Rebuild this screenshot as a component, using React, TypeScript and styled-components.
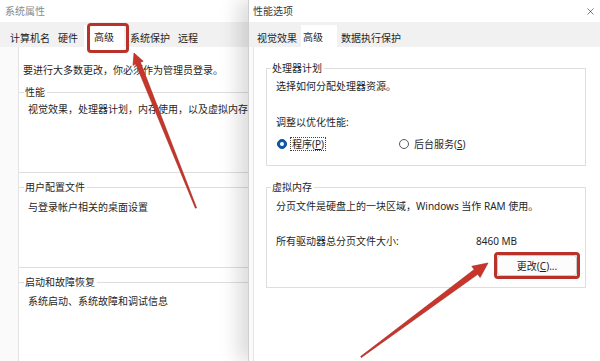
import React from 'react'
import styled, { createGlobalStyle, css } from 'styled-components'
import { X } from 'lucide-react'

const GlobalStyle = createGlobalStyle`
    html, body {
        margin: 0;
        padding: 0;
        background: #ffffff;
    }
`

const RED = '#b9322a'

const Screen = styled.div`
    position: relative;
    width: 600px;
    height: 361px;
    display: flex;
    overflow: hidden;
    background: #ffffff;
    font-family: 'Noto Sans', 'Noto Sans CJK SC', sans-serif;
    font-size: 10px;
    color: #1f1f1f;
`

const Dialog = styled.section<{ $width: number; $front?: boolean }>`
    width: ${({ $width }) => $width}px;
    flex: none;
    display: flex;
    flex-direction: column;
    overflow: hidden;
    background: #fafafa;
    ${({ $front }) =>
        $front &&
        css`
            border-left: 1px solid #cfcfcf;
            box-shadow: -10px 0 18px rgba(0, 0, 0, 0.14);
            z-index: 1;
        `}
`

const TitleBar = styled.header<{ $padLeft: number; $inactive?: boolean }>`
    height: 22px;
    flex: none;
    display: flex;
    align-items: center;
    justify-content: space-between;
    padding: 0 5px 0 ${({ $padLeft }) => $padLeft}px;
    background: #ffffff;
    color: ${({ $inactive }) => ($inactive ? '#8a8a8a' : '#3a3a3a')};
    line-height: 14px;
`

const CloseButton = styled.span`
    display: flex;
    color: #222;
`

const TabStrip = styled.nav<{ $padLeft: number }>`
    height: 25px;
    flex: none;
    display: flex;
    align-items: flex-end;
    padding-left: ${({ $padLeft }) => $padLeft}px;
    background: #f1f1f1;
`

const Tab = styled.div<{ $active?: boolean; $pad?: string; $margin?: string; $highlight?: boolean }>`
    position: relative;
    height: ${({ $active }) => ($active ? 22 : 20)}px;
    display: flex;
    align-items: center;
    padding: ${({ $pad }) => $pad || '0 4px'};
    margin: ${({ $margin }) => $margin || '0'};
    white-space: nowrap;
    background: ${({ $active }) => ($active ? '#ffffff' : 'transparent')};
    ${({ $highlight }) =>
        $highlight &&
        css`
            &::after {
                content: '';
                position: absolute;
                left: 3px;
                right: -5px;
                top: -2px;
                bottom: -6px;
                border: 3px solid ${RED};
                border-radius: 4px;
            }
        `}
`

const LeftPanel = styled.div`
    flex: 1;
    display: flex;
    flex-direction: column;
    margin-left: 18px;
    padding-top: 16px;
    border-left: 1px solid #e3e3e3;
    background: #ffffff;
`

const RightPanel = styled.div`
    flex: 1;
    display: flex;
    flex-direction: column;
    margin-left: 4px;
    padding: 14px 15px 0 12px;
    border-left: 1px solid #e6e6e6;
    background: #ffffff;
`

const Line = styled.div<{ $gap?: number; $indent?: number }>`
    height: 14px;
    line-height: 14px;
    white-space: nowrap;
    margin-top: ${({ $gap }) => $gap || 0}px;
    padding-left: ${({ $indent }) => $indent || 0}px;
`

const Group = styled.div<{ $gap?: number; $grow?: boolean }>`
    display: flex;
    flex-direction: column;
    margin-top: ${({ $gap }) => $gap || 0}px;
    ${({ $grow }) => $grow && 'flex: 1;'}
`

const GroupHead = styled.div`
    height: 14px;
    display: flex;
`

const HeadLead = styled.span<{ $boxed?: boolean }>`
    width: 5px;
    margin-top: 7px;
    box-sizing: border-box;
    border-top: 1px solid #dedede;
    ${({ $boxed }) => $boxed && 'border-left: 1px solid #dedede;'}
`

const HeadTail = styled.span<{ $boxed?: boolean }>`
    flex: 1;
    margin-top: 7px;
    border-top: 1px solid #dedede;
    ${({ $boxed }) => $boxed && 'border-right: 1px solid #dedede;'}
`

const GroupLabel = styled.span`
    line-height: 14px;
    padding: 0 2px 0 1px;
    white-space: nowrap;
`

const GroupBody = styled.div<{ $boxed?: boolean; $pad: string; $height?: number }>`
    display: flex;
    flex-direction: column;
    padding: ${({ $pad }) => $pad};
    border-bottom: 1px solid #dedede;
    ${({ $height }) => $height && `height: ${$height}px; box-sizing: border-box;`}
    ${({ $boxed }) =>
        $boxed &&
        css`
            border-left: 1px solid #dedede;
            border-right: 1px solid #dedede;
        `}
`

const RadioRow = styled.div`
    margin-top: 8px;
    height: 14px;
    display: grid;
    grid-template-columns: 122px auto;
    padding-left: 1px;
`

const RadioOption = styled.label`
    display: flex;
    align-items: center;
    gap: 3px;
    white-space: nowrap;
`

const RadioDot = styled.span<{ $checked?: boolean }>`
    width: 10px;
    height: 10px;
    box-sizing: border-box;
    border-radius: 50%;
    display: flex;
    align-items: center;
    justify-content: center;
    border: 1px solid ${({ $checked }) => ($checked ? '#0d4f96' : '#5a5a5a')};
    background: ${({ $checked }) => ($checked ? '#0d5aa7' : '#ffffff')};
    &::after {
        content: '';
        width: 4px;
        height: 4px;
        border-radius: 50%;
        background: ${({ $checked }) => ($checked ? '#ffffff' : 'transparent')};
    }
`

const RadioText = styled.span<{ $focused?: boolean }>`
    line-height: 12px;
    padding: 0 1px;
    border: 1px dotted ${({ $focused }) => ($focused ? '#444' : 'transparent')};
`

const SizeRow = styled.div`
    margin-top: 21px;
    height: 14px;
    line-height: 14px;
    display: grid;
    grid-template-columns: 200px auto;
    white-space: nowrap;
`

const ButtonRow = styled.div`
    margin-top: 4px;
    display: flex;
    justify-content: flex-end;
    padding-right: 5px;
`

const Highlight = styled.div`
    display: flex;
    border: 3px solid ${RED};
    border-radius: 4px;
`

const PushButton = styled.button`
    width: 80px;
    height: 21px;
    padding: 0;
    border: 1px solid #c9c9c9;
    border-radius: 3px;
    background: #fcfcfc;
    font: inherit;
    color: #1f1f1f;
`

const Annotations = styled.svg`
    position: absolute;
    left: 0;
    top: 0;
    pointer-events: none;
    z-index: 5;
`

type Arrow = { tail: [number, number]; head: [number, number]; shaft: number; headW: number; headL: number }

function arrowPoints({ tail, head, shaft, headW, headL }: Arrow) {
    const [tx, ty] = tail
    const [hx, hy] = head
    const len = Math.hypot(hx - tx, hy - ty)
    const dx = (hx - tx) / len
    const dy = (hy - ty) / len
    const nx = -dy
    const ny = dx
    const bx = hx - dx * headL
    const by = hy - dy * headL
    const pts: [number, number][] = [
        [tx + nx * 0.6, ty + ny * 0.6],
        [bx + (nx * shaft) / 2, by + (ny * shaft) / 2],
        [bx + (nx * headW) / 2, by + (ny * headW) / 2],
        [hx, hy],
        [bx - (nx * headW) / 2, by - (ny * headW) / 2],
        [bx - (nx * shaft) / 2, by - (ny * shaft) / 2],
        [tx - nx * 0.6, ty - ny * 0.6],
    ]
    return pts.map(([x, y]) => `${x.toFixed(1)},${y.toFixed(1)}`).join(' ')
}

const arrows: Arrow[] = [
    { tail: [196, 208], head: [134, 53], shaft: 5, headW: 11, headL: 11 },
    { tail: [361, 357], head: [488, 263], shaft: 6, headW: 14, headL: 15 },
]

export default function App() {
    return (
        <Screen>
            <GlobalStyle />
            <Dialog $width={248}>
                <TitleBar $padLeft={5} $inactive>
                    系统属性
                </TitleBar>
                <TabStrip $padLeft={6}>
                    <Tab>计算机名</Tab>
                    <Tab>硬件</Tab>
                    <Tab $active $highlight $pad="0 10px" $margin="0 2px">
                        高级
                    </Tab>
                    <Tab>系统保护</Tab>
                    <Tab>远程</Tab>
                </TabStrip>
                <LeftPanel>
                    <Line $indent={4}>要进行大多数更改，你必须作为管理员登录。</Line>
                    <Group $gap={8}>
                        <GroupHead>
                            <HeadLead />
                            <GroupLabel>性能</GroupLabel>
                            <HeadTail />
                        </GroupHead>
                        <GroupBody $pad="3px 0 0 9px" $height={74}>
                            <Line>视觉效果，处理器计划，内存使用，以及虚拟内存</Line>
                        </GroupBody>
                    </Group>
                    <Group $gap={7}>
                        <GroupHead>
                            <HeadLead />
                            <GroupLabel>用户配置文件</GroupLabel>
                            <HeadTail />
                        </GroupHead>
                        <GroupBody $pad="6px 0 0 9px" $height={74}>
                            <Line>与登录帐户相关的桌面设置</Line>
                        </GroupBody>
                    </Group>
                    <Group $gap={7} $grow>
                        <GroupHead>
                            <HeadLead />
                            <GroupLabel>启动和故障恢复</GroupLabel>
                            <HeadTail />
                        </GroupHead>
                        <GroupBody $pad="5px 0 0 9px" $height={90}>
                            <Line>系统启动、系统故障和调试信息</Line>
                        </GroupBody>
                    </Group>
                </LeftPanel>
            </Dialog>

            <Dialog $width={352} $front>
                <TitleBar $padLeft={4}>
                    <span>性能选项</span>
                    <CloseButton>
                        <X size={11} strokeWidth={1.3} />
                    </CloseButton>
                </TitleBar>
                <TabStrip $padLeft={4}>
                    <Tab>视觉效果</Tab>
                    <Tab $active $pad="0 14px 0 2px">
                        高级
                    </Tab>
                    <Tab>数据执行保护</Tab>
                </TabStrip>
                <RightPanel>
                    <Group>
                        <GroupHead>
                            <HeadLead $boxed />
                            <GroupLabel>处理器计划</GroupLabel>
                            <HeadTail $boxed />
                        </GroupHead>
                        <GroupBody $boxed $pad="4px 0 14px 9px">
                            <Line>选择如何分配处理器资源。</Line>
                            <Line $gap={22}>调整以优化性能:</Line>
                            <RadioRow>
                                <RadioOption>
                                    <RadioDot $checked />
                                    <RadioText $focused>
                                        程序(<u>P</u>)
                                    </RadioText>
                                </RadioOption>
                                <RadioOption>
                                    <RadioDot />
                                    <RadioText>
                                        后台服务(<u>S</u>)
                                    </RadioText>
                                </RadioOption>
                            </RadioRow>
                        </GroupBody>
                    </Group>
                    <Group $gap={14}>
                        <GroupHead>
                            <HeadLead $boxed />
                            <GroupLabel>虚拟内存</GroupLabel>
                            <HeadTail $boxed />
                        </GroupHead>
                        <GroupBody $boxed $pad="5px 0 8px 9px">
                            <Line>分页文件是硬盘上的一块区域，Windows 当作 RAM 使用。</Line>
                            <SizeRow>
                                <span>所有驱动器总分页文件大小:</span>
                                <span>8460 MB</span>
                            </SizeRow>
                            <ButtonRow>
                                <Highlight>
                                    <PushButton>
                                        更改(<u>C</u>)...
                                    </PushButton>
                                </Highlight>
                            </ButtonRow>
                        </GroupBody>
                    </Group>
                </RightPanel>
            </Dialog>

            <Annotations width={600} height={361} viewBox="0 0 600 361">
                {arrows.map((a, i) => (
                    <polygon
                        key={i}
                        points={arrowPoints(a)}
                        fill="#c8352b"
                        stroke="#a02a22"
                        strokeWidth={0.6}
                        strokeLinejoin="round"
                    />
                ))}
            </Annotations>
        </Screen>
    )
}
